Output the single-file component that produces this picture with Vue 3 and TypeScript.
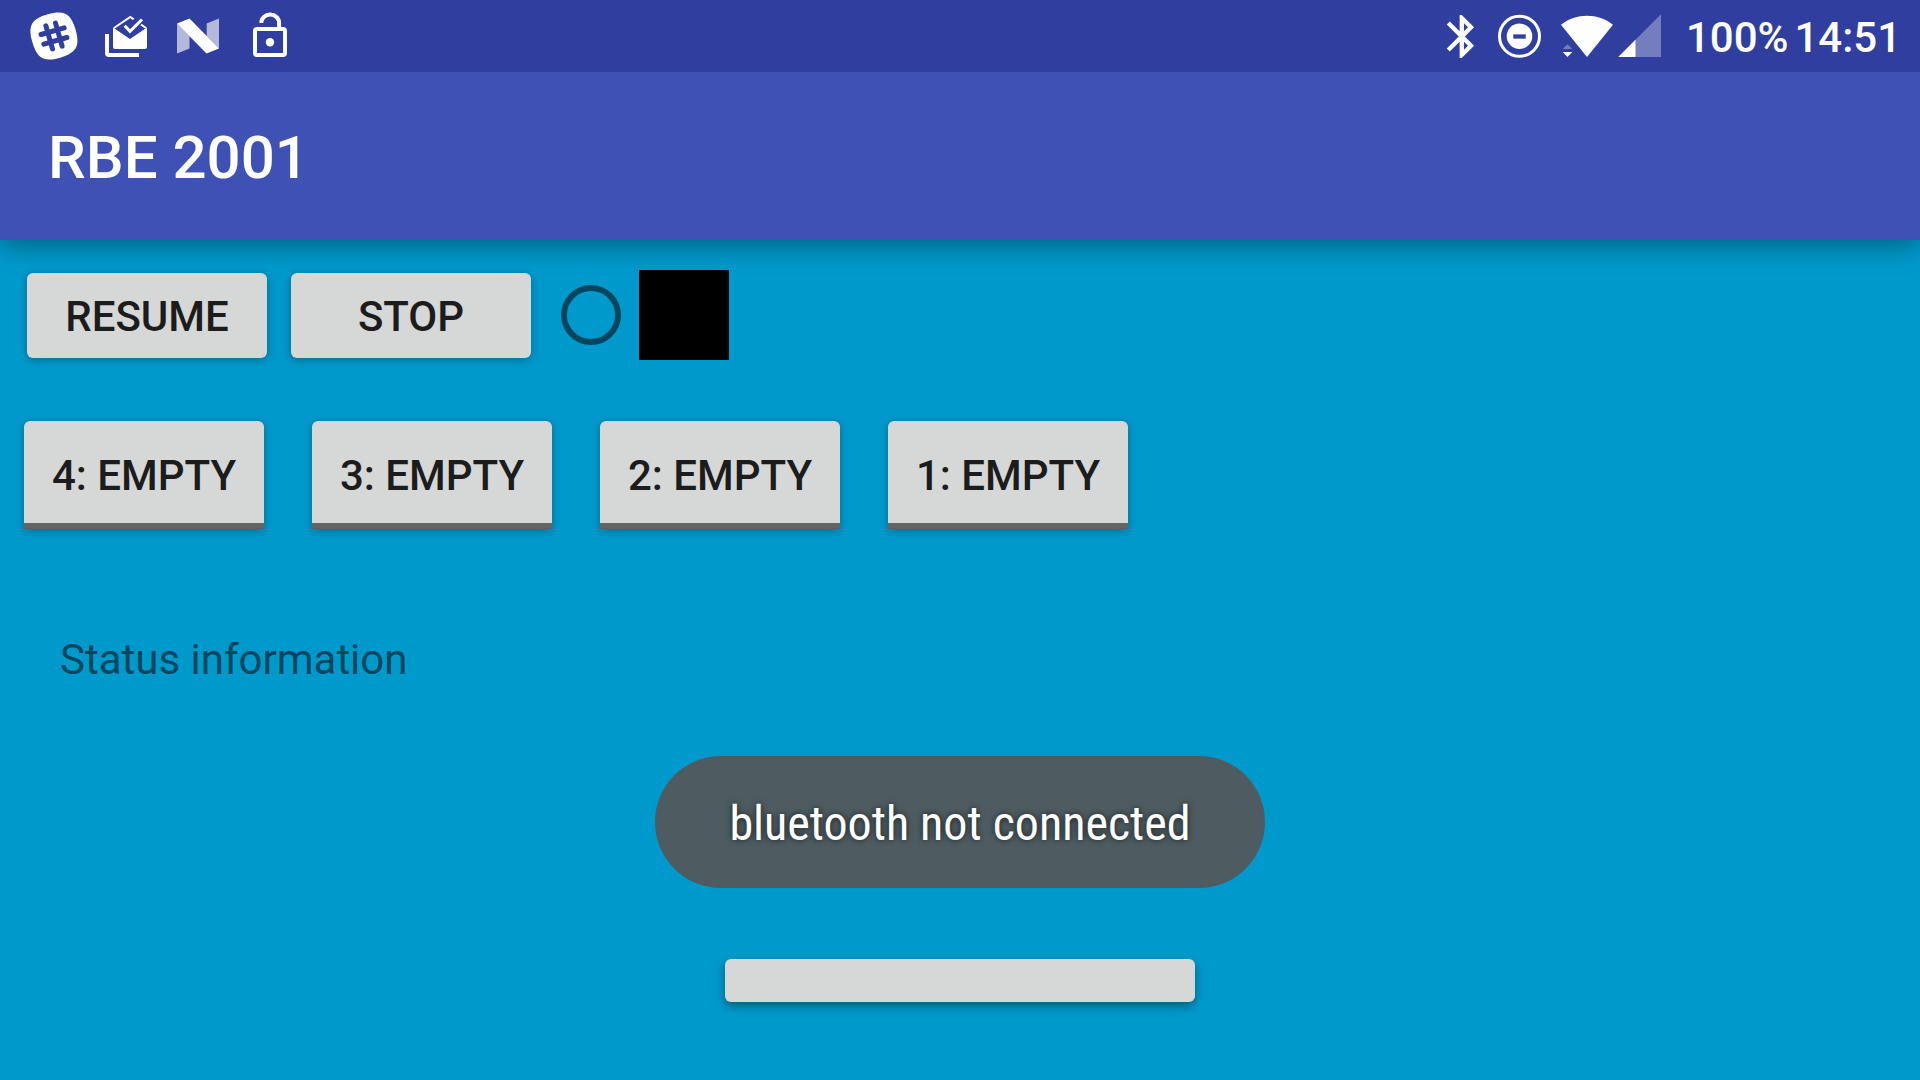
<script setup lang="ts">
import { ref } from 'vue'

interface Slot {
  id: number
  filled: boolean
}

const slots = ref<Slot[]>([4, 3, 2, 1].map((id) => ({ id, filled: false })))
const status = ref('Status information')
const toast = ref('bluetooth not connected')

function toggle(slot: Slot) {
  slot.filled = !slot.filled
}
</script>

<template>
  <div class="screen">
    <div class="status-bar">
      <div class="notifications">
        <svg class="icon" viewBox="0 0 72 72" aria-hidden="true">
          <g transform="translate(36 36) rotate(-16)">
            <path
              d="M0-22.5C17-22.5 22.5-17 22.5 0S17 22.5 0 22.5-22.5 17-22.5 0-17-22.5 0-22.5z"
              fill="#fff"
            />
            <path
              d="M-5-12V12M5-12V12M-12-5H12M-12 5H12"
              fill="none"
              stroke="#303f9f"
              stroke-width="5"
              stroke-linecap="round"
            />
          </g>
        </svg>
        <svg class="icon" viewBox="0 0 72 72" aria-hidden="true">
          <path d="M17 34V53q0 2 2 2H49" fill="none" stroke="#fff" stroke-width="4" />
          <path d="M23 27.5V47q0 2 2 2H55q2 0 2-2V27.5L40 39z" fill="#fff" />
          <path d="M24 28L40.3 17 56 28" fill="none" stroke="#fff" stroke-width="2" />
          <path d="M42 24L52 14" stroke="#303f9f" stroke-width="4" />
          <path d="M34.7 25.7L40 31.5 52 19.5" fill="none" stroke="#303f9f" stroke-width="6" />
          <path d="M34.7 25.7L40 31.3 52 19.5" fill="none" stroke="#fff" stroke-width="3" />
        </svg>
        <svg class="icon" viewBox="0 0 72 72" aria-hidden="true">
          <path
            d="M15 23.5L27.5 36V48.5L15 53.5zM44.7 23.5L57 18.5V48.5L44.7 36z"
            fill="#fff"
            opacity=".64"
          />
          <path d="M15 23.5L27.5 18.5 57 48.5 44.5 53.5z" fill="#fff" />
        </svg>
        <svg class="icon" viewBox="0 0 72 72" aria-hidden="true">
          <rect x="21" y="29" width="30" height="26" rx="2" fill="none" stroke="#fff" stroke-width="4" />
          <circle cx="36" cy="42.3" r="4.2" fill="#fff" />
          <path d="M27.3 23a8.9 8.4 0 0 1 17.8 0V28" fill="none" stroke="#fff" stroke-width="4" />
        </svg>
      </div>
      <div class="system">
        <svg class="icon narrow" viewBox="0 0 60 72" aria-hidden="true">
          <path
            transform="translate(6 10.7) scale(2.15)"
            d="M17.71 7.71L12 2h-1v7.59L6.41 5 5 6.41 10.59 12 5 17.59 6.41 19 11 14.41V22h1l5.71-5.71-4.3-4.29 4.3-4.29zM13 5.83l1.88 1.88L13 9.59V5.83zm1.88 10.46L13 18.17v-3.76l1.88 1.88z"
            fill="#fff"
          />
        </svg>
        <svg class="icon narrow" viewBox="0 0 60 72" aria-hidden="true">
          <circle cx="29.5" cy="36.3" r="20" fill="none" stroke="#fff" stroke-width="3" />
          <circle cx="29.5" cy="36.3" r="12.8" fill="#fff" />
          <path d="M23.3 36.5H35.7" stroke="#303f9f" stroke-width="4.3" />
        </svg>
        <svg class="icon narrow" viewBox="0 0 60 72" aria-hidden="true">
          <path d="M37 57L11 24.7C26 12.7 48 12.7 63 24.7z" fill="#fff" />
          <path d="M12.7 49L17.5 44.3 22.3 49z" fill="#fff" opacity=".33" />
          <path d="M12.7 52L17.5 57 22.3 52z" fill="#fff" />
        </svg>
        <svg class="icon narrow" viewBox="0 0 60 72" aria-hidden="true">
          <path d="M8.3 57L51 14.3V57z" fill="#fff" opacity=".33" />
          <path d="M8.3 57L25.5 39.8V57z" fill="#fff" />
        </svg>
        <span class="battery">100%</span>
        <time class="clock">14:51</time>
      </div>
    </div>

    <header class="app-bar">
      <h1>RBE 2001</h1>
    </header>

    <main class="content">
      <div class="controls">
        <button type="button" class="btn">RESUME</button>
        <button type="button" class="btn">STOP</button>
        <input type="radio" class="radio" name="heartbeat" aria-label="Heartbeat" />
        <div class="swatch"></div>
      </div>

      <div class="slots">
        <button
          v-for="slot in slots"
          :key="slot.id"
          type="button"
          class="btn slot"
          :aria-pressed="slot.filled"
          @click="toggle(slot)"
        >
          {{ slot.id }}: {{ slot.filled ? 'FULL' : 'EMPTY' }}
        </button>
      </div>

      <p class="status">{{ status }}</p>

      <button type="button" class="btn connect" aria-label="Connect"></button>
    </main>

    <div class="toast-layer">
      <div class="toast" role="status">{{ toast }}</div>
    </div>
  </div>
</template>

<style>
body {
  margin: 0;
  background: #0099cc;
}
</style>

<style scoped>
.screen {
  display: flex;
  flex-direction: column;
  min-height: 100vh;
  background: #0099cc;
  font-family: Roboto, sans-serif;
  font-size: 42px;
  line-height: 50px;
}

.status-bar {
  position: relative;
  z-index: 1;
  display: flex;
  justify-content: space-between;
  height: 72px;
  background: #303f9f;
  color: #fff;
}

.notifications,
.system {
  display: flex;
  align-items: center;
}

.notifications {
  padding-left: 18px;
}

.system {
  padding-right: 19px;
  font-weight: 500;
}

.icon {
  display: block;
  flex: none;
  width: 72px;
  height: 72px;
  overflow: visible;
}

.icon.narrow {
  width: 60px;
}

.battery,
.clock {
  padding-top: 4px;
}

.battery {
  margin-left: 16px;
}

.clock {
  margin-left: 6px;
}

.app-bar {
  display: flex;
  align-items: center;
  height: 168px;
  box-sizing: border-box;
  padding: 4px 48px 0;
  background: #3f51b5;
  box-shadow: 0 6px 24px rgba(0, 0, 0, 0.35);
  color: #fff;
}

h1 {
  margin: 0;
  font-size: 60px;
  font-weight: 500;
  line-height: 72px;
}

.content {
  display: flex;
  flex: 1;
  flex-direction: column;
  padding: 30px 24px 78px;
}

.controls {
  display: flex;
  align-items: center;
  gap: 24px;
  padding-left: 3px;
}

.btn {
  width: 240px;
  height: 85px;
  padding: 4px 0 0;
  border: 0;
  border-radius: 6px;
  background: #d6d7d7;
  box-shadow: 0 2px 8px rgba(0, 0, 0, 0.3);
  color: #1c1c1c;
  font: inherit;
  font-weight: 500;
  text-align: center;
}

.radio {
  appearance: none;
  flex: none;
  width: 60px;
  height: 60px;
  margin: 0 -6px 0 6px;
  border: 6px solid #00465e;
  border-radius: 50%;
}

.swatch {
  width: 90px;
  height: 90px;
  background: #000;
}

.slots {
  display: flex;
  gap: 48px;
  margin-top: 61px;
}

.slot {
  height: 108px;
  padding-top: 8px;
  border-bottom: 6px solid #636464;
  border-radius: 6px 6px 0 0;
}

.status {
  margin: 106px 0 0;
  padding: 0 36px;
  color: #00465e;
}

.connect {
  align-self: center;
  width: 470px;
  height: 43px;
  margin-top: auto;
  box-shadow: 0 4px 10px rgba(0, 0, 0, 0.4);
}

.toast-layer {
  position: fixed;
  right: 0;
  bottom: 192px;
  left: 0;
  display: flex;
  justify-content: center;
  pointer-events: none;
}

.toast {
  padding: 40px 74px 36px;
  border-radius: 66px;
  background: #4e5c61;
  color: #fff;
  font-family: 'Roboto Condensed', Roboto, sans-serif;
  font-size: 48px;
  line-height: 56px;
  text-shadow: 0 0 6px rgba(0, 0, 0, 0.7);
}
</style>
